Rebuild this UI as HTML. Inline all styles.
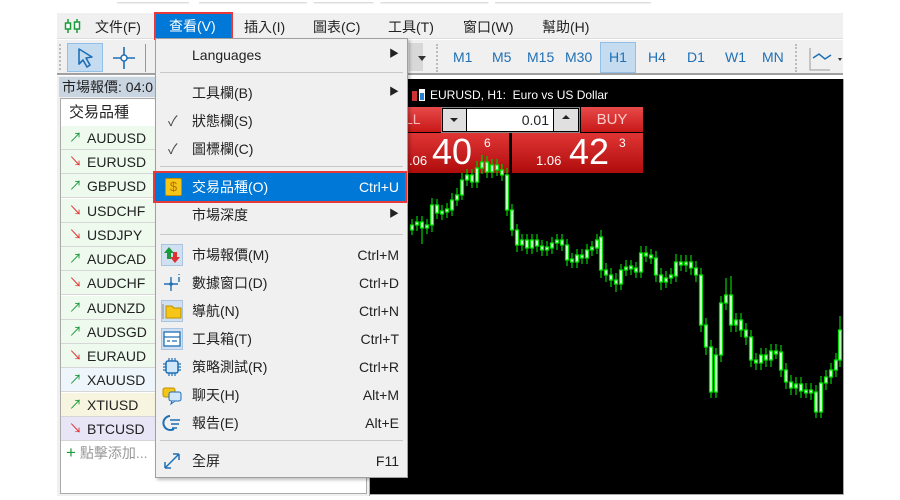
<!DOCTYPE html>
<html><head><meta charset="utf-8"><style>
*{margin:0;padding:0;box-sizing:border-box}
body{width:900px;height:500px;background:#fff;position:relative;overflow:hidden;font-family:"Liberation Sans","Noto Sans CJK TC",sans-serif;font-size:14px;color:#222}
.a{position:absolute}
.mb span{position:absolute;top:17px;font-size:14px}
.tf{position:absolute;top:49px;color:#1f6fb4;font-size:14px}
.row{position:absolute;left:61px;width:305px;height:24px;border-bottom:1px solid #d6d6d6;font-size:14px;line-height:24px}
.row b{font-weight:normal;position:absolute;left:8px;font-size:13px}
.row i{font-style:normal;position:absolute;left:26px}
.up{color:#1a9a3a}.dn{color:#e03030}
.mi{position:absolute;left:156px;width:251px;height:28px;line-height:28px;font-size:14px}
.mi .t{position:absolute;left:36px}
.mi .k{position:absolute;right:8px}
.sep{position:absolute;left:160px;width:243px;height:1px;background:#c8c8c8}
.ic{position:absolute;left:5px;top:3px;width:22px;height:22px}
</style></head><body>
<!-- title bar faint -->
<div class="a" style="left:57px;top:0;width:786px;height:13px;overflow:hidden;color:#ddd;font-size:12px;line-height:6px">&nbsp;&nbsp;&nbsp;&nbsp;&nbsp;&nbsp;&nbsp;&nbsp;&nbsp;&nbsp;&nbsp;&nbsp;&nbsp;&nbsp;&nbsp;&nbsp;&nbsp;&nbsp;━━━━━━&nbsp;&nbsp;&nbsp;━━━━━━━━━&nbsp;&nbsp;━━━━━&nbsp;&nbsp;━━━━━━━━━&nbsp;&nbsp;━━━━━━━━━━━━━</div>
<!-- menubar -->
<div class="a" style="left:57px;top:13px;width:786px;height:26px;background:#f0f0f0;border-bottom:1px solid #ddd"></div>
<svg class="a" style="left:64px;top:17px" width="18" height="18"><path d="M4 2v14M13 2v14" stroke="#1a9a3a" stroke-width="1.5"/><rect x="1.5" y="6" width="5" height="6" fill="#fff" stroke="#1a9a3a" stroke-width="1.5"/><rect x="10.5" y="5" width="5" height="7" fill="#fff" stroke="#1a9a3a" stroke-width="1.5"/></svg>
<div class="mb">
<span style="left:95px">文件(F)</span>
<span style="left:244px">插入(I)</span>
<span style="left:313px">圖表(C)</span>
<span style="left:388px">工具(T)</span>
<span style="left:463px">窗口(W)</span>
<span style="left:542px">幫助(H)</span>
</div>
<div class="a" style="left:154px;top:12px;width:79px;height:29px;border:2px solid #e8393a;background:#0078d7;color:#fff;font-size:14px;line-height:25px;padding-left:13px">查看(V)</div>
<!-- toolbar -->
<div class="a" style="left:57px;top:40px;width:786px;height:35px;background:#f0f0f0;border-bottom:2px solid #a0a0a0"></div>
<div class="a" style="left:59px;top:44px;width:2px;height:26px;border-left:2px dotted #bbb"></div>
<div class="a" style="left:67px;top:43px;width:36px;height:29px;background:#c5dcf0;border:1px solid #90c0e8"></div>
<svg class="a" style="left:74px;top:46px" width="24" height="24"><path d="M5 3l13 8-6 1 4 7-3 2-4-7-4 4z" fill="none" stroke="#1f6fb4" stroke-width="1.6" stroke-linejoin="round"/></svg>
<svg class="a" style="left:111px;top:45px" width="26" height="26"><path d="M13 2v22M2 13h22" stroke="#1f6fb4" stroke-width="1.6"/><circle cx="13" cy="13" r="3" fill="#fff" stroke="#1f6fb4" stroke-width="1.5"/></svg>
<div class="a" style="left:145px;top:44px;width:1px;height:28px;background:#999"></div>
<div class="a" style="left:409px;top:43px;width:14px;height:28px;background:#d8d8d8"></div>
<div class="a" style="left:418px;top:56px;width:0;height:0;border:4px solid transparent;border-top:5px solid #333"></div>
<div class="a" style="left:436px;top:44px;width:2px;height:28px;border-left:2px dotted #bbb"></div>
<div class="a" style="left:600px;top:42px;width:36px;height:31px;background:#c5dcf0;border:1px solid #90c0e8"></div>
<span class="tf" style="left:453px">M1</span><span class="tf" style="left:492px">M5</span><span class="tf" style="left:527px">M15</span><span class="tf" style="left:565px">M30</span><span class="tf" style="left:609px">H1</span><span class="tf" style="left:648px">H4</span><span class="tf" style="left:687px">D1</span><span class="tf" style="left:725px">W1</span><span class="tf" style="left:762px">MN</span>
<div class="a" style="left:795px;top:44px;width:2px;height:28px;border-left:2px dotted #bbb"></div>
<svg class="a" style="left:809px;top:46px" width="34" height="26"><path d="M1 2v22h20" stroke="#999" fill="none"/><path d="M4 12l6-4 6 5 6-4" stroke="#1f6fb4" fill="none" stroke-width="1.5"/><path d="M29 12l4 0-2 3z" fill="#333"/></svg>
<!-- left panel -->
<div class="a" style="left:57px;top:76px;width:313px;height:420px;background:#f0f0f0;border-right:1px solid #aaa"></div>
<div class="a" style="left:59px;top:77px;width:311px;height:20px;background:#cad5e2;font-size:14px;line-height:20px;padding-left:3px">市場報價: 04:0</div>
<div class="a" style="left:60px;top:98px;width:307px;height:396px;background:#fff;border:1px solid #aaa"></div>
<div class="a" style="left:69px;top:101px;font-size:15px">交易品種</div>
<div class="row" style="top:126px;background:#eefaee"><b class="up">↗</b><i>AUDUSD</i></div>
<div class="row" style="top:150px;background:#eefaee"><b class="dn">↘</b><i>EURUSD</i></div>
<div class="row" style="top:174px;background:#eefaee"><b class="up">↗</b><i>GBPUSD</i></div>
<div class="row" style="top:199px;background:#eefaee"><b class="dn">↘</b><i>USDCHF</i></div>
<div class="row" style="top:223px;background:#eefaee"><b class="dn">↘</b><i>USDJPY</i></div>
<div class="row" style="top:247px;background:#eefaee"><b class="up">↗</b><i>AUDCAD</i></div>
<div class="row" style="top:271px;background:#eefaee"><b class="dn">↘</b><i>AUDCHF</i></div>
<div class="row" style="top:296px;background:#eefaee"><b class="up">↗</b><i>AUDNZD</i></div>
<div class="row" style="top:320px;background:#eefaee"><b class="up">↗</b><i>AUDSGD</i></div>
<div class="row" style="top:344px;background:#eefaee"><b class="dn">↘</b><i>EURAUD</i></div>
<div class="row" style="top:368px;background:#eef6fc"><b class="up">↗</b><i>XAUUSD</i></div>
<div class="row" style="top:393px;background:#f7f4e0"><b class="up">↗</b><i>XTIUSD</i></div>
<div class="row" style="top:417px;background:#e7e5f6"><b class="dn">↘</b><i>BTCUSD</i></div>
<div class="a" style="left:66px;top:443px;font-size:14px;color:#999"><span style="color:#1a9a3a;font-size:17px">+</span> 點擊添加...</div>
<!-- chart -->
<div class="a" style="left:370px;top:79px;width:474px;height:416px;background:#000;border-right:1px solid #aaa;border-bottom:1px solid #aaa"></div>
<svg class="a" style="left:412px;top:88px" width="14" height="14"><rect x="0" y="3" width="5" height="10" fill="#c33"/><rect x="7" y="1" width="6" height="12" fill="#fff"/><rect x="8" y="5" width="4" height="7" fill="#2a7fd0"/></svg>
<div class="a" style="left:430px;top:88px;color:#fff;font-size:12px">EURUSD, H1:&nbsp; Euro vs US Dollar</div>
<div class="a" style="left:405px;top:107px;width:36px;height:25px;background:linear-gradient(#e84a4a,#c81818);color:#fbb;font-size:14px;line-height:25px">LL</div>
<div class="a" style="left:441px;top:107px;width:139px;height:26px;background:#000;border:1px solid #888"></div>
<div class="a" style="left:443px;top:109px;width:23px;height:22px;background:#e0e0e0"></div>
<div class="a" style="left:450px;top:118px;border:4px solid transparent;border-top:4px solid #222"></div>
<div class="a" style="left:467px;top:109px;width:86px;height:22px;background:#fff;text-align:right;padding-right:4px;font-size:14px;line-height:22px">0.01</div>
<div class="a" style="left:554px;top:109px;width:24px;height:22px;background:#e0e0e0"></div>
<div class="a" style="left:562px;top:111px;border:4px solid transparent;border-bottom:4px solid #222"></div>
<div class="a" style="left:581px;top:107px;width:62px;height:25px;background:linear-gradient(#e84a4a,#c81818);color:#fcc;font-size:15px;line-height:25px;text-align:center">BUY</div>
<div class="a" style="left:405px;top:133px;width:104px;height:40px;background:linear-gradient(#e03535,#b00c0c);color:#fff"><span class="a" style="left:4px;top:20px;font-size:13px">.06</span><span class="a" style="left:27px;top:-2px;font-size:36px">40</span><span class="a" style="left:79px;top:3px;font-size:12px">6</span></div>
<div class="a" style="left:512px;top:133px;width:131px;height:40px;background:linear-gradient(#e03535,#b00c0c);color:#fff"><span class="a" style="left:24px;top:20px;font-size:13px">1.06</span><span class="a" style="left:57px;top:-2px;font-size:36px">42</span><span class="a" style="left:107px;top:3px;font-size:12px">3</span></div>
<svg class="a" style="left:0;top:0" width="900" height="500">
<path stroke="#00c000" stroke-width="1.3" fill="none" d="M412 219V235M417 216V231M422 216V244M427 219V234M432 198V232M437 199V219M442 205V220M447 203V218M452 193V216M457 188V206M462 173V200M467 169V186M472 169V188M477 161V188M482 155V174M487 156V178M492 159V178M497 159V176M502 164V181M507 168V216M512 204V236M517 224V252M522 234V251M527 234V254M532 234V254M537 234V252M542 240V256M547 241V256M552 237V254M557 234V250M562 234V251M567 239V266M572 253V268M577 249V268M582 249V264M587 244V264M592 241V256M597 234V254M601 230V278M606 263V282M611 268V287M616 273V292M621 264V290M626 260V276M631 260V275M636 262V278M641 246V278M646 246V262M651 249V264M656 251V282M661 268V290M666 271V288M671 268V284M676 254V282M681 255V271M686 255V272M691 255V275M696 261V282M701 268V332M706 318V355M711 340V398M716 348V398M721 296V362M726 278V310M731 276V332M736 313V332M741 313V337M746 323V345M751 330V367M756 353V370M761 348V370M766 348V367M771 344V367M776 344V359M781 345V377M786 363V389M791 375V395M796 377V395M801 377V398M806 383V398M811 383V400M816 385V418M821 376V418M826 370V390M831 363V384M836 353V377M840 316V367"/>
<path stroke="#00e000" stroke-width="1.2" fill="#d8ffd8" d="M410.5 225h3v5h-3zM415.5 222h3v3h-3zM420.5 222h3v6h-3zM425.5 225h3v3h-3zM430.5 205h3v20h-3zM435.5 205h3v8h-3zM440.5 211h3v3h-3zM445.5 209h3v3h-3zM450.5 200h3v10h-3zM455.5 195h3v5h-3zM460.5 180h3v15h-3zM465.5 175h3v5h-3zM470.5 175h3v7h-3zM475.5 168h3v14h-3zM480.5 162h3v6h-3zM485.5 162h3v10h-3zM490.5 165h3v7h-3zM495.5 165h3v5h-3zM500.5 170h3v5h-3zM505.5 175h3v35h-3zM510.5 210h3v20h-3zM515.5 230h3v15h-3zM520.5 240h3v5h-3zM525.5 240h3v8h-3zM530.5 240h3v8h-3zM535.5 240h3v6h-3zM540.5 246h3v4h-3zM545.5 247h3v3h-3zM550.5 243h3v5h-3zM555.5 240h3v3h-3zM560.5 240h3v5h-3zM565.5 245h3v15h-3zM570.5 259h3v3h-3zM575.5 255h3v7h-3zM580.5 255h3v3h-3zM585.5 250h3v8h-3zM590.5 247h3v3h-3zM595.5 240h3v8h-3zM599.5 237h3v33h-3zM604.5 270h3v5h-3zM609.5 275h3v5h-3zM614.5 280h3v4h-3zM619.5 270h3v14h-3zM624.5 267h3v3h-3zM629.5 266h3v3h-3zM634.5 268h3v4h-3zM639.5 253h3v19h-3zM644.5 253h3v3h-3zM649.5 255h3v3h-3zM654.5 258h3v17h-3zM659.5 275h3v7h-3zM664.5 278h3v4h-3zM669.5 275h3v3h-3zM674.5 262h3v14h-3zM679.5 262h3v3h-3zM684.5 262h3v3h-3zM689.5 262h3v6h-3zM694.5 268h3v7h-3zM699.5 275h3v50h-3zM704.5 325h3v22h-3zM709.5 347h3v45h-3zM714.5 355h3v37h-3zM719.5 303h3v52h-3zM724.5 295h3v8h-3zM729.5 295h3v30h-3zM734.5 320h3v5h-3zM739.5 320h3v10h-3zM744.5 330h3v7h-3zM749.5 337h3v23h-3zM754.5 360h3v3h-3zM759.5 355h3v8h-3zM764.5 355h3v5h-3zM769.5 351h3v9h-3zM774.5 351h3v3h-3zM779.5 352h3v18h-3zM784.5 370h3v12h-3zM789.5 382h3v6h-3zM794.5 384h3v4h-3zM799.5 384h3v7h-3zM804.5 390h3v3h-3zM809.5 390h3v3h-3zM814.5 392h3v20h-3zM819.5 383h3v29h-3zM824.5 377h3v6h-3zM829.5 370h3v7h-3zM834.5 360h3v10h-3zM838.5 330h3v30h-3z"/>
</svg>
<!-- dropdown menu -->
<div class="a" style="left:155px;top:38px;width:253px;height:440px;background:#f0f0f0;border:1px solid #a0a0a0;box-shadow:2px 2px 3px rgba(0,0,0,.25)"></div>
<div class="mi" style="top:41px"><span class="t">Languages</span><span class="k" style="font-size:10px">▶</span></div>
<div class="sep" style="top:72px"></div>
<div class="mi" style="top:79px"><span class="t">工具欄(B)</span><span class="k" style="font-size:10px">▶</span></div>
<div class="mi" style="top:107px"><span class="a" style="left:12px;color:#444">✓</span><span class="t">狀態欄(S)</span></div>
<div class="mi" style="top:135px"><span class="a" style="left:12px;color:#444">✓</span><span class="t">圖標欄(C)</span></div>
<div class="sep" style="top:166px"></div>
<div class="a" style="left:153px;top:171px;width:254px;height:32px;border:2px solid #e8393a;background:#0078d7"></div>
<div class="mi" style="top:173px;color:#fff"><div class="ic" style="left:9px;top:5px;width:17px;height:18px;background:#f5c518;border:1px solid #c09000;border-radius:2px;color:#b07000;font-size:13px;line-height:16px;text-align:center">$</div><span class="t">交易品種(O)</span><span class="k">Ctrl+U</span></div>
<div class="mi" style="top:201px"><span class="t">市場深度</span><span class="k" style="font-size:10px">▶</span></div>
<div class="sep" style="top:234px"></div>
<div class="mi" style="top:241px"><div class="ic" style="background:#d0e0f0;border:1px solid #a8c4e0"></div><svg class="ic" viewBox="0 0 22 22"><path d="M8 3l-5 6h3v6h4V9h3z" fill="#1a9a3a"/><path d="M14 19l5-6h-3V8h-4v5H9z" fill="#e03030"/></svg><span class="t">市場報價(M)</span><span class="k">Ctrl+M</span></div>
<div class="mi" style="top:269px"><svg class="ic" viewBox="0 0 22 22"><path d="M10 5v14M3 12h14" stroke="#1f6fb4" stroke-width="1.4"/><circle cx="10" cy="12" r="1.8" fill="#1f6fb4"/><path d="M18 2v1M18 5v5" stroke="#1f6fb4" stroke-width="1.4"/></svg><span class="t">數據窗口(D)</span><span class="k">Ctrl+D</span></div>
<div class="mi" style="top:297px"><div class="ic" style="background:#d0e0f0;border:1px solid #a8c4e0"></div><svg class="ic" viewBox="0 0 22 22"><path d="M2 4v15" stroke="#888"/><path d="M5 6h6l2 2h7v10H5z" fill="#f5c518" stroke="#c09000"/></svg><span class="t">導航(N)</span><span class="k">Ctrl+N</span></div>
<div class="mi" style="top:325px"><div class="ic" style="background:#d0e0f0;border:1px solid #a8c4e0"></div><svg class="ic" viewBox="0 0 22 22"><rect x="3" y="4" width="16" height="14" fill="#fff" stroke="#1f6fb4" stroke-width="1.3"/><path d="M3 9h16M6 13h3M11 13h5" stroke="#1f6fb4" stroke-width="1.3"/></svg><span class="t">工具箱(T)</span><span class="k">Ctrl+T</span></div>
<div class="mi" style="top:353px"><svg class="ic" viewBox="0 0 22 22"><rect x="5" y="5" width="12" height="12" rx="2" fill="#cfe6fb" stroke="#1f6fb4" stroke-width="1.5"/><path d="M8 2v3M11 2v3M14 2v3M8 17v3M11 17v3M14 17v3M2 8h3M2 11h3M2 14h3M17 8h3M17 11h3M17 14h3" stroke="#1f6fb4" stroke-width="1.2"/></svg><span class="t">策略測試(R)</span><span class="k">Ctrl+R</span></div>
<div class="mi" style="top:381px"><svg class="ic" viewBox="0 0 22 22"><rect x="2" y="4" width="12" height="9" rx="2" fill="#f5c518" stroke="#c09000"/><rect x="8" y="8" width="12" height="9" rx="2" fill="#cfe6fb" stroke="#1f6fb4"/><path d="M11 17l-1 3 4-3" fill="#cfe6fb" stroke="#1f6fb4"/></svg><span class="t">聊天(H)</span><span class="k">Alt+M</span></div>
<div class="mi" style="top:409px"><svg class="ic" viewBox="0 0 22 22"><path d="M9 4a7 7 0 1 0 4 13" fill="none" stroke="#1f6fb4" stroke-width="2"/><path d="M9 8h10M10 12h8M11 16h5" stroke="#1f6fb4" stroke-width="1.6"/></svg><span class="t">報告(E)</span><span class="k">Alt+E</span></div>
<div class="sep" style="top:440px"></div>
<div class="mi" style="top:447px"><svg class="ic" viewBox="0 0 22 22"><path d="M4 18L18 4M4 18v-6M4 18h6M18 4h-6M18 4v6" stroke="#1f6fb4" stroke-width="1.5" fill="none"/></svg><span class="t">全屏</span><span class="k">F11</span></div>
</body></html>
